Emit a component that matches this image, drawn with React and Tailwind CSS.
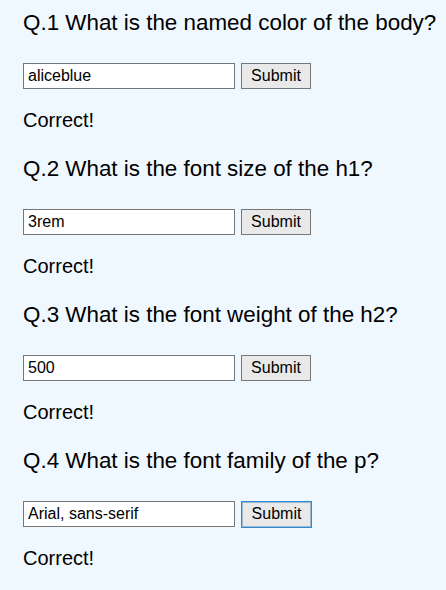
import React, { useState } from 'react';

const questions = [
  { id: 1, text: 'What is the named color of the body?', answer: 'aliceblue' },
  { id: 2, text: 'What is the font size of the h1?', answer: '3rem' },
  { id: 3, text: 'What is the font weight of the h2?', answer: '500' },
  { id: 4, text: 'What is the font family of the p?', answer: 'Arial, sans-serif', focused: true },
];

const Question = ({ q }) => {
  const [value, setValue] = useState(q.answer);

  return (
    <div className="pt-[10px] pb-[14px]">
      <h2 className="text-[22.4px] leading-[26px] font-normal">
        Q.{q.id} {q.text}
      </h2>
      <div className="mt-[27px] flex items-center h-[26px]">
        <input
          type="text"
          value={value}
          onChange={(e) => setValue(e.target.value)}
          className="w-[212px] h-[26px] bg-white border border-[#767676] px-[4px] text-[16px] leading-[18px] text-black outline-none"
        />
        {q.focused ? (
          <button
            type="button"
            className="ml-[6px] w-[71px] h-[27px] bg-[#e9e9e9] border border-[#2f8ad3] shadow-[inset_0_0_0_1px_#9bb8cf] text-[16px] leading-[18px] text-black"
          >
            Submit
          </button>
        ) : (
          <button
            type="button"
            className="ml-[6px] w-[70px] h-[26px] bg-[#e9e9e9] border border-[#767676] text-[16px] leading-[18px] text-black"
          >
            Submit
          </button>
        )}
      </div>
      <p className="mt-[20px] text-[20px] leading-[23px]">Correct!</p>
    </div>
  );
};

const App = () => {
  return (
    <div className="min-h-[590px] bg-[#f0f8ff] pl-[23px] font-['Liberation_Sans',Arial,sans-serif] text-black">
      {questions.map((q) => (
        <Question key={q.id} q={q} />
      ))}
    </div>
  );
};

export default App;
